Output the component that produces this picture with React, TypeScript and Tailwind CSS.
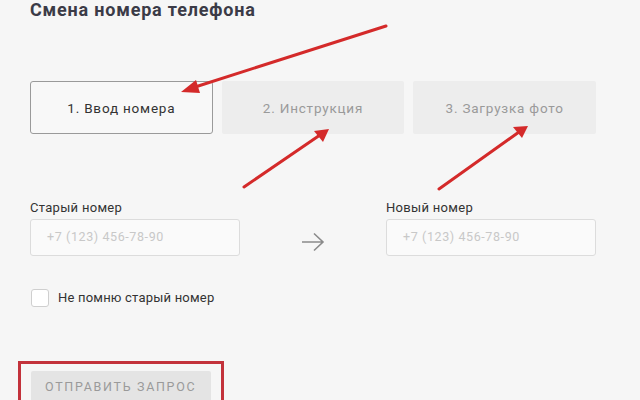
const font = { fontFamily: "Roboto, 'Noto Sans', sans-serif" };

function Field({ label }: { label: string }) {
  return (
    <div className="flex w-[210px] flex-col">
      <span className="text-[13px] leading-[16px] tracking-[0.3px] text-[#333]">{label}</span>
      <div className="mt-[3px] flex h-[37px] items-center rounded-[3px] border border-[#dcdcdc] bg-[#fafafa] px-[16px] text-[12.5px] tracking-[0.6px] text-[#c8c8c8]">
        +7 (123) 456-78-90
      </div>
    </div>
  );
}

export default function App() {
  return (
    <div
      className="relative h-[400px] w-[640px] overflow-hidden bg-[#f6f6f6]"
      style={font}
    >
      <div className="flex flex-col px-[30px]">
        <h1 className="text-[18px] font-bold leading-[20px] tracking-[0.8px] text-[#3b3b47]">
          Смена номера телефона
        </h1>

        <div className="mt-[61px] grid w-[566px] grid-cols-3 gap-[9px]">
          <div className="flex h-[53px] items-center justify-center rounded-[3px] border border-[#9a9a9a] bg-[#f8f8f8] pt-[2px] text-[13.5px] tracking-[0.8px] text-[#333]">
            1. Ввод номера
          </div>
          <div className="flex h-[53px] items-center justify-center rounded-[2px] bg-[#ededed] pt-[2px] text-[13.5px] tracking-[0.8px] text-[#9a9a9a]">
            2. Инструкция
          </div>
          <div className="flex h-[53px] items-center justify-center rounded-[2px] bg-[#ededed] pt-[2px] text-[13.5px] tracking-[0.8px] text-[#9a9a9a]">
            3. Загрузка фото
          </div>
        </div>

        <div className="mt-[66px] flex w-[566px] items-end">
          <Field label="Старый номер" />
          <div className="flex h-[37px] flex-1 items-center justify-center pt-[8px]">
            <svg width="24" height="20" viewBox="0 0 24 20" fill="none" stroke="#8a8a8a" strokeWidth="1.6">
              <path d="M1 10 H22 M13 1.5 L22 10 L13 18.5" />
            </svg>
          </div>
          <Field label="Новый номер" />
        </div>

        <div className="mt-[32px] flex items-center gap-[9px]">
          <div className="ml-[1px] h-[18px] w-[18px] rounded-[3px] border border-[#cfcfcf] bg-white" />
          <span className="text-[13px] tracking-[0.2px] text-[#333]">Не помню старый номер</span>
        </div>

        <div className="ml-[-12px] mt-[53px] w-[206px] border-[3px] border-b-0 border-[#c3323b] px-[10px] pt-[7px] pb-[4px]">
          <div className="flex h-[34px] items-center rounded-[2px] bg-[#e4e4e4] px-[14px] text-[12.5px] tracking-[1.7px] text-[#9a9a9a]">
            ОТПРАВИТЬ ЗАПРОС
          </div>
        </div>
      </div>

      <svg className="pointer-events-none absolute left-0 top-0" width="640" height="400" viewBox="0 0 640 400">
        <g stroke="#d42a2a" strokeWidth="3" strokeLinecap="round" fill="#d42a2a">
          <line x1="386" y1="26" x2="192" y2="88" />
          <line x1="244" y1="187" x2="320" y2="135" />
          <line x1="439" y1="189" x2="519" y2="132" />
        </g>
        <g fill="#d42a2a">
          <polygon points="181,92 196,80 200,93" />
          <polygon points="329,129 314,131 323,142" />
          <polygon points="528,126 513,127 522,138" />
        </g>
      </svg>
    </div>
  );
}
